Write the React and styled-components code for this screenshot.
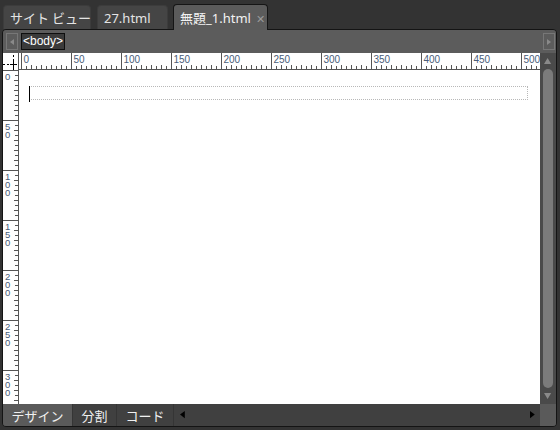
import React from "react";
import styled, { createGlobalStyle } from "styled-components";

const Global = createGlobalStyle`
  html, body { margin: 0; padding: 0; background: #333333; }
  body { font-family: "Noto Sans", "Noto Sans CJK JP", sans-serif; }
`;

const Shell = styled.div`
  width: 560px;
  height: 430px;
  background: #333333;
  display: flex;
  flex-direction: column;
  overflow: hidden;
`;

const TabBar = styled.div`
  height: 29px;
  display: flex;
  align-items: flex-end;
  padding-left: 3px;
  gap: 6px;
`;

const DocTab = styled.div`
  box-sizing: border-box;
  width: ${(p) => p.$w}px;
  height: ${(p) => (p.$active ? 26 : 24)}px;
  margin-bottom: ${(p) => (p.$active ? -1 : 0)}px;
  background: ${(p) => (p.$active ? "#5b5b5b" : "#454545")};
  border: 1px solid ${(p) => (p.$active ? "#151515" : "#3c3c3c")};
  border-bottom: none;
  border-radius: 4px 4px 0 0;
  color: ${(p) => (p.$active ? "#f2f2f2" : "#e4e4e4")};
  font-size: 13px;
  display: flex;
  align-items: center;
  padding-left: 6px;
  gap: 5px;
  position: relative;
  z-index: ${(p) => (p.$active ? 2 : 0)};
  white-space: nowrap;
`;

const Close = styled.span`
  color: #9a9a9a;
  font-size: 11px;
  margin-top: 1px;
`;

const Frame = styled.div`
  margin: 0 3px 0 2px;
  height: 398px;
  box-sizing: border-box;
  border: 1px solid #141414;
  border-radius: 4px;
  display: flex;
  flex-direction: column;
  overflow: hidden;
  position: relative;
  z-index: 1;
`;

const Toolbar = styled.div`
  height: 23px;
  flex: none;
  background: #5c5c5c;
  display: flex;
  align-items: center;
  padding: 0 1px 0 3px;
  gap: 3px;
`;

const NavButton = styled.div`
  box-sizing: border-box;
  width: 12px;
  height: 17px;
  border: 1px solid #777777;
  display: flex;
  align-items: center;
  justify-content: center;
  margin-left: ${(p) => (p.$right ? "auto" : "0")};
`;

const TagChip = styled.div`
  box-sizing: border-box;
  height: 17px;
  padding: 0 1px;
  background: #3b3b3b;
  border: 1px solid #0e0e0e;
  color: #ffffff;
  font-family: "Liberation Sans", sans-serif;
  font-size: 12px;
  line-height: 15px;
`;

const Workspace = styled.div`
  flex: 1;
  display: grid;
  grid-template-columns: 16px 1fr 16px;
  grid-template-rows: 17px 1fr;
  min-height: 0;
`;

const Corner = styled.div`
  background: #ffffff;
  border-right: 1px solid #555;
  box-sizing: border-box;
`;

const HRulerBox = styled.div`
  background: #ffffff;
  overflow: hidden;
`;

const VRulerBox = styled.div`
  background: #ffffff;
  border-right: 1px solid #555;
  box-sizing: border-box;
  overflow: hidden;
`;

const Canvas = styled.div`
  background: #ffffff;
  padding: 16px 12px 0 10px;
  position: relative;
`;

const BodyOutline = styled.div`
  height: 12px;
  border: 1px dotted #b8b8b8;
  position: relative;
`;

const Caret = styled.div`
  position: absolute;
  left: -1px;
  top: -1px;
  width: 1px;
  height: 16px;
  background: #000;
`;

const ScrollTrack = styled.div`
  grid-column: 3;
  grid-row: 1 / span 2;
  background: #4a4a4a;
  display: flex;
  flex-direction: column;
  align-items: center;
  padding: 5px 0 5px;
  gap: 5px;
`;

const Thumb = styled.div`
  flex: 1;
  width: 10px;
  background: #7b7b7b;
  border-radius: 5px;
`;

const BottomBar = styled.div`
  height: 22px;
  flex: none;
  background: #404040;
  display: flex;
  align-items: stretch;
`;

const ViewTab = styled.div`
  box-sizing: border-box;
  width: ${(p) => p.$w}px;
  background: ${(p) => (p.$active ? "#5a5a5a" : "#404040")};
  border-right: 1px solid #353535;
  color: #f0f0f0;
  font-size: 13px;
  display: flex;
  align-items: center;
  justify-content: center;
  font-family: "Noto Sans CJK JP", sans-serif;
`;

const ArrowZone = styled.div`
  flex: 1;
  display: flex;
  align-items: center;
  justify-content: space-between;
  padding: 0 5px 0 6px;
`;

const CornerBox = styled.div`
  width: 16px;
  background: #5a5a5a;
`;

const Tri = ({ dir, color, size = 6 }) => {
  const s = size;
  const pts = {
    left: `${s * 0.8},0 ${s * 0.8},${s * 1.2} 0,${s * 0.6}`,
    right: `0,0 0,${s * 1.2} ${s * 0.8},${s * 0.6}`,
    up: `0,${s} ${s * 1.2},${s} ${s * 0.6},0`,
    down: `0,0 ${s * 1.2},0 ${s * 0.6},${s}`,
  }[dir];
  const w = dir === "left" || dir === "right" ? s * 0.8 : s * 1.2;
  const h = dir === "left" || dir === "right" ? s * 1.2 : s;
  return (
    <svg width={w} height={h} viewBox={`0 0 ${w} ${h}`} style={{ display: "block" }}>
      <polygon points={pts} fill={color} />
    </svg>
  );
};

const HRuler = () => {
  const width = 521;
  const origin = 2;
  const ticks = [];
  const labels = [];
  for (let v = 0; v <= 520; v += 5) {
    const x = origin + v + 0.5;
    if (x > width) break;
    if (v % 50 === 0) {
      ticks.push(<line key={v} x1={x} x2={x} y1={0} y2={17} stroke="#555" />);
      labels.push(
        <text key={"t" + v} x={x + 2} y={10} fontSize="10" fill="#4a5d78" fontFamily="'Liberation Sans', sans-serif">
          {v}
        </text>
      );
    } else {
      const h = v % 10 === 0 ? 4 : 3;
      ticks.push(<line key={v} x1={x} x2={x} y1={16 - h} y2={16} stroke="#555" />);
    }
  }
  return (
    <svg width={width} height={17} style={{ display: "block" }}>
      {ticks}
      {labels}
      <line x1={0} x2={width} y1={16.5} y2={16.5} stroke="#555" />
    </svg>
  );
};

const VRuler = () => {
  const height = 340;
  const ticks = [];
  const labels = [];
  for (let v = 0; v <= 335; v += 5) {
    const y = v + 0.5;
    if (v % 50 === 0) {
      ticks.push(<line key={v} x1={0} x2={15} y1={y} y2={y} stroke="#555" />);
      labels.push(
        <text key={"t" + v} x={2} y={y + 9} fontSize="9.5" fill="#4a5d78" fontFamily="'Liberation Sans', sans-serif">
          {String(v)
            .split("")
            .map((d, i) => (
              <tspan key={i} x={2} dy={i === 0 ? 0 : 8}>
                {d}
              </tspan>
            ))}
        </text>
      );
    } else {
      const w = v % 10 === 0 ? 4 : 3;
      ticks.push(<line key={v} x1={15 - w} x2={15} y1={y} y2={y} stroke="#555" />);
    }
  }
  return (
    <svg width={15} height={height} style={{ display: "block" }}>
      {ticks}
      {labels}
    </svg>
  );
};

const Crosshair = () => (
  <svg width={15} height={17} style={{ display: "block" }}>
    <line x1={0} x2={10} y1={11.5} y2={11.5} stroke="#000" strokeDasharray="2 2" />
    <line x1={7} x2={14} y1={11.5} y2={11.5} stroke="#000" />
    <line x1={10.5} x2={10.5} y1={2} y2={8} stroke="#000" strokeDasharray="2 2" />
    <line x1={10.5} x2={10.5} y1={8} y2={17} stroke="#000" />
  </svg>
);

export default function App() {
  return (
    <>
      <Global />
      <Shell>
        <TabBar>
          <DocTab $w={88} style={{ fontFamily: "'Noto Sans CJK JP', sans-serif" }}>
            サイト ビュー
          </DocTab>
          <DocTab $w={71}>27.html</DocTab>
          <DocTab $w={95} $active style={{ marginLeft: -1 }}>
            <span style={{ fontFamily: "'Noto Sans', 'Noto Sans CJK JP', sans-serif" }}>無題_1.html</span>
            <Close>✕</Close>
          </DocTab>
        </TabBar>
        <Frame>
          <Toolbar>
            <NavButton>
              <Tri dir="left" color="#8a8a8a" size={5} />
            </NavButton>
            <TagChip>&lt;body&gt;</TagChip>
            <NavButton $right>
              <Tri dir="right" color="#8a8a8a" size={5} />
            </NavButton>
          </Toolbar>
          <Workspace>
            <Corner>
              <Crosshair />
            </Corner>
            <HRulerBox>
              <HRuler />
            </HRulerBox>
            <ScrollTrack>
              <Tri dir="up" color="#8a8a8a" size={6} />
              <Thumb />
              <Tri dir="down" color="#8a8a8a" size={6} />
            </ScrollTrack>
            <VRulerBox>
              <VRuler />
            </VRulerBox>
            <Canvas>
              <BodyOutline>
                <Caret />
              </BodyOutline>
            </Canvas>
          </Workspace>
          <BottomBar>
            <ViewTab $w={70} $active>デザイン</ViewTab>
            <ViewTab $w={44}>分割</ViewTab>
            <ViewTab $w={57}>コード</ViewTab>
            <ArrowZone>
              <Tri dir="left" color="#000" size={6} />
              <Tri dir="right" color="#000" size={6} />
            </ArrowZone>
            <CornerBox />
          </BottomBar>
        </Frame>
      </Shell>
    </>
  );
}
